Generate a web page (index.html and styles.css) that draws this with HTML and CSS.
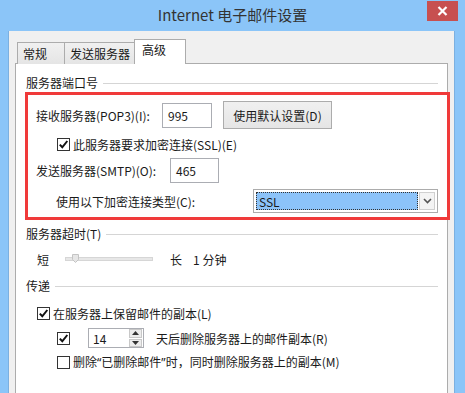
FILE: index.html
```html
<!DOCTYPE html>
<html lang="zh-CN">
<head>
    <meta charset="UTF-8">
    <title>Internet 电子邮件设置</title>
    <link rel="stylesheet" href="styles.css">
</head>
<body>
    <div class="titlebar">
        <span></span>
        <div class="title">Internet 电子邮件设置</div>
        <div class="close">
            <svg width="11" height="10" viewBox="0 0 11 10"><path d="M1.5 1 L9.5 9 M9.5 1 L1.5 9" stroke="#fff" stroke-width="2.2"/></svg>
        </div>
    </div>

    <div class="client">
        <div class="tabs">
            <div class="tab tab-general">常规</div>
            <div class="tab tab-out">发送服务器</div>
            <div class="tab tab-adv active">高级</div>
        </div>

        <div class="panel">
            <!-- 服务器端口号 -->
            <div class="group-title">服务器端口号</div>
            <div class="highlight">
                <div class="row row-pop">
                    <label class="lbl lbl-pop">接收服务器(POP3)(I):</label>
                    <div class="textbox tb-pop">995</div>
                    <button class="btn">使用默认设置(D)</button>
                </div>
                <div class="row row-ssl">
                    <span class="check checked">
                        <svg width="11" height="11" viewBox="0 0 11 11"><path d="M1.8 5.6 L4.3 8.3 L9.3 2" fill="none" stroke="#111" stroke-width="2"/></svg>
                    </span>
                    <span class="check-text">此服务器要求加密连接(SSL)(E)</span>
                </div>
                <div class="row row-smtp">
                    <label class="lbl lbl-smtp">发送服务器(SMTP)(O):</label>
                    <div class="textbox tb-smtp">465</div>
                </div>
                <div class="row row-enc">
                    <label class="lbl lbl-enc">使用以下加密连接类型(C):</label>
                    <div class="select">
                        <div class="select-value">SSL</div>
                        <div class="select-arrow">
                            <svg width="9" height="6" viewBox="0 0 9 6"><path d="M1 1 L4.5 4.5 L8 1" fill="none" stroke="#555" stroke-width="1.6"/></svg>
                        </div>
                    </div>
                </div>
            </div>

            <!-- 服务器超时 -->
            <div class="group-title group-timeout">服务器超时(T)</div>
            <div class="slider-row">
                <span class="short">短</span>
                <div class="slider">
                    <div class="track"></div>
                    <svg class="thumb" width="7" height="9" viewBox="0 0 7 9"><path d="M0.5 0.5 H6.5 V5.5 L3.5 8.5 L0.5 5.5 Z" fill="#e6e6e6" stroke="#c4c4c4"/></svg>
                </div>
                <span class="long">长</span>
                <span class="minutes">1 分钟</span>
            </div>

            <!-- 传递 -->
            <div class="group-title group-delivery">传递</div>
            <div class="row opt opt-keep">
                <span class="check checked">
                    <svg width="11" height="11" viewBox="0 0 11 11"><path d="M1.8 5.6 L4.3 8.3 L9.3 2" fill="none" stroke="#111" stroke-width="2"/></svg>
                </span>
                <span class="check-text">在服务器上保留邮件的副本(L)</span>
            </div>
            <div class="row opt opt-days">
                <span class="check checked">
                    <svg width="11" height="11" viewBox="0 0 11 11"><path d="M1.8 5.6 L4.3 8.3 L9.3 2" fill="none" stroke="#111" stroke-width="2"/></svg>
                </span>
                <div class="spinner">
                    <span class="spin-value">14</span>
                    <div class="spin-buttons">
                        <div class="spin-btn">
                            <svg width="7" height="4" viewBox="0 0 7 4"><path d="M0 4 L3.5 0 L7 4 Z" fill="#333"/></svg>
                        </div>
                        <div class="spin-btn">
                            <svg width="7" height="4" viewBox="0 0 7 4"><path d="M0 0 L3.5 4 L7 0 Z" fill="#333"/></svg>
                        </div>
                    </div>
                </div>
                <span class="days-text">天后删除服务器上的邮件副本(R)</span>
            </div>
            <div class="row opt opt-deleted">
                <span class="check"></span>
                <span class="check-text">删除<span class="q">“</span>已删除邮件<span class="q">”</span>时，同时删除服务器上的副本(M)</span>
            </div>
        </div>
    </div>
</body>
</html>
```

FILE: styles.css
```css
* {
    box-sizing: border-box;
}

body {
    margin: 0;
    width: 465px;
    height: 393px;
    overflow: hidden;
    background-color: #8bc5f8;
    font-family: "Noto Sans CJK SC", "Noto Sans", sans-serif;
    font-size: 12px;
    color: #1a1a1a;
}

/* window title bar */
.titlebar {
    height: 31px;
    display: grid;
    grid-template-columns: 1fr auto 1fr;
    align-items: start;
}

.title {
    font-size: 15px;
    line-height: 30px;
    color: #333;
}

.close {
    justify-self: end;
    margin-top: 1px;
    margin-right: 7px;
    width: 31px;
    height: 20px;
    background-color: #c75050;
    display: flex;
    align-items: center;
    justify-content: center;
}

/* client area */
.client {
    margin-left: 8px;
    width: 447px;
    height: 362px;
    background-color: #f0f0f0;
    padding-top: 9px;
    border-left: 1px solid #7cb0e0;
    border-right: 1px solid #7cb0e0;
}

.tabs {
    display: flex;
    align-items: flex-end;
    margin-left: 8px;
    height: 24px;
    position: relative;
    z-index: 1;
}

.tab {
    height: 22px;
    border: 1px solid #acacac;
    border-bottom: none;
    background: linear-gradient(#f0f0f0, #e5e5e5);
    padding-left: 5px;
    line-height: 21px;
}

.tab-general {
    width: 48px;
}

.tab-out {
    width: 71px;
    margin-left: -1px;
}

.tab.active {
    width: 52px;
    height: 25px;
    margin-left: -1px;
    background: #fff;
    padding-left: 7px;
    line-height: 20px;
}

.panel {
    margin-left: 6px;
    margin-top: -1px;
    width: 433px;
    height: 340px;
    background-color: #fff;
    border: 1px solid #acacac;
    padding: 11px 0 0 10px;
}

/* group headers */
.group-title {
    display: flex;
    align-items: center;
    gap: 5px;
    width: 412px;
    height: 16px;
    line-height: 16px;
}

.group-title::after {
    content: "";
    flex: 1;
    height: 1px;
    background-color: #d5d5d5;
}

.group-timeout {
    margin-top: 6px;
}

.group-delivery {
    margin-top: 9px;
}

/* red highlight box */
.highlight {
    margin-top: 1px;
    margin-left: -1px;
    width: 425px;
    border: 3px solid #f03a3a;
    padding: 6px 0 4px 8px;
}

.row {
    display: flex;
    align-items: center;
}

.row-pop {
    height: 28px;
}

.row-ssl {
    height: 27px;
    margin-top: 2px;
    padding-left: 21px;
}

.row-smtp {
    height: 25px;
}

.row-enc {
    height: 24px;
    margin-top: 6px;
    padding-left: 20px;
}

.lbl-pop {
    width: 126px;
}

.lbl-smtp {
    width: 134px;
}

.lbl-enc {
    width: 197px;
}

.textbox {
    height: 25px;
    border: 1px solid #abadb3;
    background: #fff;
    padding-left: 5px;
    line-height: 23px;
}

.tb-pop {
    width: 50px;
}

.tb-smtp {
    width: 49px;
}

.btn {
    margin-left: 11px;
    width: 109px;
    height: 28px;
    border: 1px solid #acacac;
    background: linear-gradient(#f0f0f0, #e5e5e5);
    font-family: inherit;
    font-size: 12px;
    color: #1a1a1a;
    padding: 0;
}

.check {
    width: 13px;
    height: 13px;
    border: 1px solid #333;
    background: #fff;
    display: flex;
    align-items: center;
    justify-content: center;
    flex-shrink: 0;
}

.check-text {
    margin-left: 3px;
}

.q {
    font-family: "Noto Sans", sans-serif;
}

/* dropdown */
.select {
    width: 185px;
    height: 24px;
    border: 1px solid #acacac;
    background: #fff;
    display: flex;
    padding: 2px;
}

.select-value {
    flex: 1;
    background-color: #8cc3f9;
    border: 1px dotted #333;
    line-height: 18px;
    padding-left: 2px;
}

.select-arrow {
    width: 16px;
    margin-left: 1px;
    background: #f4f4f4;
    border: 1px solid #d0d0d0;
    display: flex;
    align-items: center;
    justify-content: center;
}

/* slider */
.slider-row {
    display: flex;
    align-items: center;
    height: 20px;
    margin-top: 7px;
    padding-left: 11px;
}

.slider {
    position: relative;
    width: 88px;
    height: 20px;
    margin-left: 16px;
}

.track {
    margin-top: 8px;
    height: 4px;
    background: #e7e7e7;
    border: 1px solid #d6d6d6;
}

.thumb {
    position: absolute;
    left: 7px;
    top: 5px;
}

.long {
    margin-left: 17px;
}

.minutes {
    margin-left: 11px;
}

/* delivery options */
.opt {
    height: 20px;
}

.opt-keep {
    margin-top: 9px;
    padding-left: 11px;
}

.opt-days {
    margin-top: 5px;
    padding-left: 31px;
}

.opt-deleted {
    margin-top: 4px;
    padding-left: 31px;
}

.spinner {
    margin-left: 18px;
    width: 56px;
    height: 20px;
    border: 1px solid #abadb3;
    display: flex;
    align-items: center;
    padding-left: 4px;
}

.spin-value {
    flex: 1;
}

.spin-buttons {
    width: 15px;
    height: 18px;
    display: flex;
    flex-direction: column;
    gap: 1px;
    padding: 0 1px;
}

.spin-btn {
    flex: 1;
    background: #ececec;
    border: 1px solid #c8c8c8;
    display: flex;
    align-items: center;
    justify-content: center;
}

.days-text {
    margin-left: 12px;
}
```
